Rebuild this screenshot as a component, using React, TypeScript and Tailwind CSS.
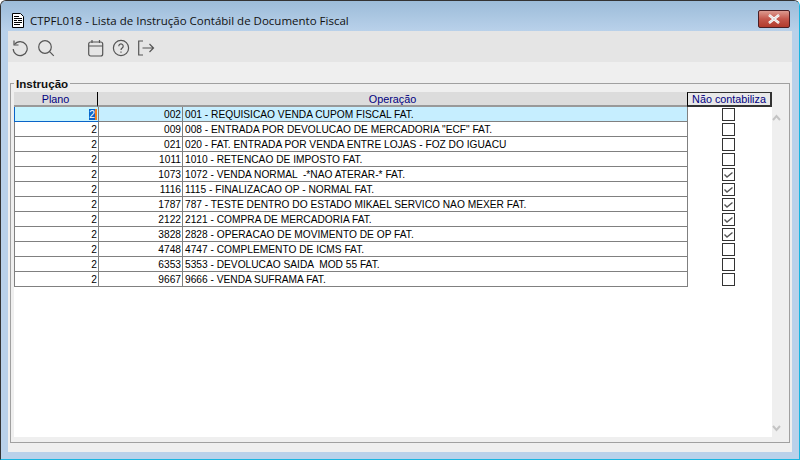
import React from "react";

interface Row {
  plano: string;
  code: string;
  operacao: string;
  checked: boolean;
}

const rows: Row[] = [
  { plano: "2", code: "002", operacao: "001 - REQUISICAO VENDA CUPOM FISCAL FAT.", checked: false },
  { plano: "2", code: "009", operacao: '008 - ENTRADA POR DEVOLUCAO DE MERCADORIA "ECF" FAT.', checked: false },
  { plano: "2", code: "021", operacao: "020 - FAT. ENTRADA POR VENDA ENTRE LOJAS - FOZ DO IGUACU", checked: false },
  { plano: "2", code: "1011", operacao: "1010 - RETENCAO DE IMPOSTO FAT.", checked: false },
  { plano: "2", code: "1073", operacao: "1072 - VENDA NORMAL  -*NAO ATERAR-* FAT.", checked: true },
  { plano: "2", code: "1116", operacao: "1115 - FINALIZACAO OP - NORMAL FAT.", checked: true },
  { plano: "2", code: "1787", operacao: "787 - TESTE DENTRO DO ESTADO MIKAEL SERVICO NAO MEXER FAT.", checked: true },
  { plano: "2", code: "2122", operacao: "2121 - COMPRA DE MERCADORIA FAT.", checked: true },
  { plano: "2", code: "3828", operacao: "2828 - OPERACAO DE MOVIMENTO DE OP FAT.", checked: true },
  { plano: "2", code: "4748", operacao: "4747 - COMPLEMENTO DE ICMS FAT.", checked: false },
  { plano: "2", code: "6353", operacao: "5353 - DEVOLUCAO SAIDA  MOD 55 FAT.", checked: false },
  { plano: "2", code: "9667", operacao: "9666 - VENDA SUFRAMA FAT.", checked: false },
];

const iconClass = "w-[18px] h-[18px] text-[#555]";

function Toolbar() {
  return (
    <div className="h-[31px] bg-[#e5e5e5] flex items-center pl-[3px] pt-[3px]">
      <svg viewBox="0 0 18 18" className={iconClass} fill="none" stroke="currentColor" strokeWidth="1.2">
        <path d="M3.5 5.5A7 7 0 1 1 2.2 10" />
        <path d="M3 1.5v4.5h4.5" />
      </svg>
      <svg viewBox="0 0 18 18" className={`${iconClass} ml-[8px]`} fill="none" stroke="currentColor" strokeWidth="1.2">
        <circle cx="8" cy="8" r="6.3" />
        <path d="M12.6 12.6l4.2 4.2" />
      </svg>
      <svg viewBox="0 0 18 18" className={`${iconClass} ml-[32px]`} fill="none" stroke="currentColor" strokeWidth="1.2">
        <rect x="1.7" y="3" width="14" height="14" rx="2" />
        <path d="M1.7 7h14M5 1v3M12.5 1v3" />
      </svg>
      <svg viewBox="0 0 18 18" className={`${iconClass} ml-[7px]`} fill="none" stroke="currentColor" strokeWidth="1.2">
        <circle cx="9" cy="9" r="7.6" />
        <path d="M6.8 7.2a2.2 2.2 0 1 1 3.4 1.8c-.8.5-1.2 1-1.2 1.9" />
        <path d="M9 12.5v1.3" />
      </svg>
      <svg viewBox="0 0 18 18" className={`${iconClass} ml-[7px]`} fill="none" stroke="currentColor" strokeWidth="1.2">
        <path d="M6 2H1.7v14H6" />
        <path d="M5.5 9h11M12.5 5l4 4-4 4" />
      </svg>
    </div>
  );
}

function CheckBox({ checked }: { checked: boolean }) {
  return (
    <div className="w-[13px] h-[13px] border border-[#333] bg-white">
      {checked && (
        <svg viewBox="0 0 11 11" className="w-[11px] h-[11px]" fill="none" stroke="#555" strokeWidth="1.4">
          <path d="M1.5 5.5l2.5 2.5 5.5-4.5" />
        </svg>
      )}
    </div>
  );
}

export default function App() {
  return (
    <div className="w-[800px] h-[460px] overflow-hidden bg-[#b9d1ea] border border-[#333] rounded-t-[6px] border-b-[#19b5e0] border-r-[#19b5e0] flex flex-col font-['Liberation_Sans',sans-serif]">
      {/* title bar */}
      <div className="h-[30px] shrink-0 flex items-center pl-[11px] pt-[8px] bg-gradient-to-b from-[#9cbcd9] to-[#b9d1ea] relative">
        <svg viewBox="0 0 12 15" className="w-[12px] h-[15px]">
          <path d="M.5.5h8l3 3v11H.5z" fill="#fff" stroke="#000" />
          <path d="M2 3.5h5M2 5.5h8M2 7.5h3M6 7.5h4M2 9.5h8M2 11.5h6" stroke="#000" strokeWidth="1.2" />
        </svg>
        <span className="ml-[6px] mt-[1px] text-[11.5px] text-[#111] font-['Open_Sans',sans-serif] whitespace-nowrap">
          CTPFL018 - Lista de Instrução Contábil de Documento Fiscal
        </span>
        <div className="absolute left-[757px] top-[9px] w-[32px] h-[18px] rounded-[2px] border border-[#4a1f25] bg-gradient-to-b from-[#dc9a90] via-[#c4574c] to-[#b13a2c] flex items-center justify-center">
          <svg viewBox="0 0 14 10" className="w-[14px] h-[10px]">
            <path d="M2 1l10 8M12 1L2 9" stroke="#fff" strokeWidth="2.6" />
            <path d="M2 1l10 8M12 1L2 9" stroke="#d8d8d8" strokeWidth="1" />
          </svg>
        </div>
      </div>

      {/* client area */}
      <div className="mx-[7px] h-[421px] bg-[#efefef] flex flex-col">
        <Toolbar />
        <div className="flex-1 px-[2px] pt-[21px] pb-[9px]">
          <div className="h-full border border-[#a0a0a0] relative pl-[3px] pt-[8px] pr-[1px] pb-[5px]">
            <div className="absolute left-[3px] top-[-7px] bg-[#efefef] px-[2px] text-[11.6px] leading-[13px] font-bold text-[#111]">
              Instrução
            </div>
            <div className="flex h-full">
              <div className="w-[758px] bg-white">
                <div className="flex h-[15px] text-[10.8px] leading-[14px] text-[#000080] bg-[#dcdcdc]">
                  <div className="w-[84px] text-center border-r border-black border-b-2 border-b-[#999]">Plano</div>
                  <div className="w-[589px] text-center border-b-2 border-b-[#999]">Operação</div>
                  <div className="w-[85px] text-center bg-[#e8e8e8] border-t border-t-[#333] border-l border-l-black border-r-2 border-r-[#333] border-b-2 border-b-[#333] whitespace-nowrap leading-[13px]">
                    Não contabiliza
                  </div>
                </div>
                {rows.map((row, i) => {
                  const bg = i === 0 ? "bg-[#c6eeff]" : "bg-white";
                  return (
                    <div key={row.code} className="flex h-[15px] text-[10.2px] leading-[15px] text-black">
                      <div className={`w-[85px] border border-t-0 border-[#808080] text-right pr-[1px] ${i === 0 ? "bg-[#c6f4ff] border-t border-t-[#0a64c8] border-l-[#0a64c8] border-b-[#0a64c8]" : "border-l-[#808080]"}`}>
                        {i === 0 ? <span className="bg-[#0a64c8] text-white border-r-2 border-r-[#f08020]">2</span> : row.plano}
                      </div>
                      <div className={`w-[84px] border-r border-b border-[#808080] text-right pr-[1px] ${bg}`}>{row.code}</div>
                      <div className={`w-[505px] border-r border-b border-[#808080] pl-[2px] whitespace-pre ${bg}`}>{row.operacao}</div>
                      <div className="w-[84px] flex justify-center items-center pr-[4px]">
                        <CheckBox checked={row.checked} />
                      </div>
                    </div>
                  );
                })}
              </div>
              <div className="flex-1 flex flex-col justify-between items-center pr-[7px] pt-[22px] pb-[5px]">
                <svg viewBox="0 0 9 7" className="w-[9px] h-[7px]" fill="none" stroke="#c4c4c4" strokeWidth="2">
                  <path d="M1 6l3.5-4L8 6" />
                </svg>
                <svg viewBox="0 0 9 7" className="w-[9px] h-[7px]" fill="none" stroke="#c4c4c4" strokeWidth="2">
                  <path d="M1 1l3.5 4L8 1" />
                </svg>
              </div>
            </div>
          </div>
        </div>
      </div>
    </div>
  );
}
